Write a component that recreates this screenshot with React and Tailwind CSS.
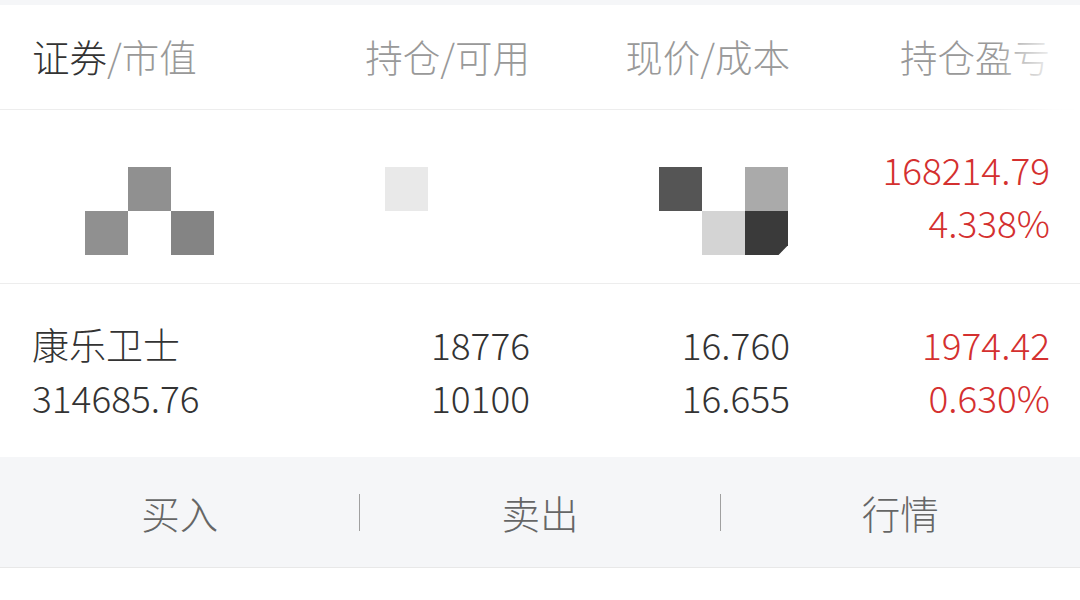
import React from "react";

const FONT = "font-['Noto_Sans_CJK_SC','Noto_Sans',sans-serif]";

function Cell({ color, className = "" }) {
  return (
    <div
      className={`w-[43px] h-[44px] ${className}`}
      style={{ backgroundColor: color || "transparent" }}
    />
  );
}

function Mosaic({ rows, className = "" }) {
  return (
    <div className={`flex flex-col ${className}`}>
      {rows.map((row, i) => (
        <div key={i} className="flex">
          {row.map((c, j) =>
            c && c.chamfer ? (
              <Cell
                key={j}
                color={c.color}
                className="[clip-path:polygon(0_0,100%_0,100%_78%,78%_100%,0_100%)]"
              />
            ) : (
              <Cell key={j} color={c} />
            )
          )}
        </div>
      ))}
    </div>
  );
}

function Col({ className = "", children }) {
  return <div className={`flex flex-col ${className}`}>{children}</div>;
}

export default function App() {
  return (
    <div className={`w-[1080px] h-[600px] bg-white overflow-hidden font-light ${FONT}`}>
      <div className="h-[5px] bg-[#f5f6f8]" />

      {/* header */}
      <div className="relative h-[105px] border-b border-[#ededed] grid grid-cols-[270px_260px_260px_260px] items-center text-[37.5px] leading-none text-[#999999]">
        <div className="pl-[32px] pb-[2px]">
          <span className="text-[#333333]">证券</span>/市值
        </div>
        <div className="text-right pb-[2px]">持仓/可用</div>
        <div className="text-right pb-[2px]">现价/成本</div>
        <div className="pl-[110px] pb-[2px] whitespace-nowrap">持仓盈亏</div>
        <div className="absolute right-0 top-0 bottom-[-1px] w-[85px] bg-linear-to-r from-white/0 via-white/90 via-70% to-white" />
      </div>

      {/* row 1 (masked) */}
      <div className="h-[174px] border-b border-[#ededed] grid grid-cols-[270px_260px_260px_260px] text-[37px] leading-[53px]">
        <div className="pl-[85px] pt-[57px]">
          <Mosaic
            rows={[
              [null, "#909090", null],
              ["#909090", null, "#848484"],
            ]}
          />
        </div>
        <div className="pl-[115px] pt-[57px]">
          <Mosaic rows={[["#e9e9e9"]]} />
        </div>
        <div className="pl-[129px] pt-[57px]">
          <Mosaic
            rows={[
              ["#555555", null, "#aaaaaa"],
              [null, "#d4d4d4", { color: "#3a3a3a", chamfer: true }],
            ]}
          />
        </div>
        <Col className="items-end justify-center text-[#d4302f] pb-[2px]">
          <div>168214.79</div>
          <div>4.338%</div>
        </Col>
      </div>

      {/* row 2 */}
      <div className="h-[173px] grid grid-cols-[270px_260px_260px_260px] text-[37px] leading-[53px] text-[#333333]">
        <Col className="pl-[32px] justify-center">
          <div>康乐卫士</div>
          <div>314685.76</div>
        </Col>
        <Col className="items-end justify-center">
          <div>18776</div>
          <div>10100</div>
        </Col>
        <Col className="items-end justify-center">
          <div>16.760</div>
          <div>16.655</div>
        </Col>
        <Col className="items-end justify-center text-[#d4302f]">
          <div>1974.42</div>
          <div>0.630%</div>
        </Col>
      </div>

      {/* action bar */}
      <div className="h-[111px] bg-[#f5f6f8] border-b border-[#e8e8e8] flex items-center text-[38.5px] leading-none text-[#666666]">
        <div className="flex-1 flex justify-center">买入</div>
        <div className="w-[1px] h-[37px] bg-[#a0a0a0]" />
        <div className="flex-1 flex justify-center">卖出</div>
        <div className="w-[1px] h-[37px] bg-[#a0a0a0]" />
        <div className="flex-1 flex justify-center">行情</div>
      </div>
    </div>
  );
}
